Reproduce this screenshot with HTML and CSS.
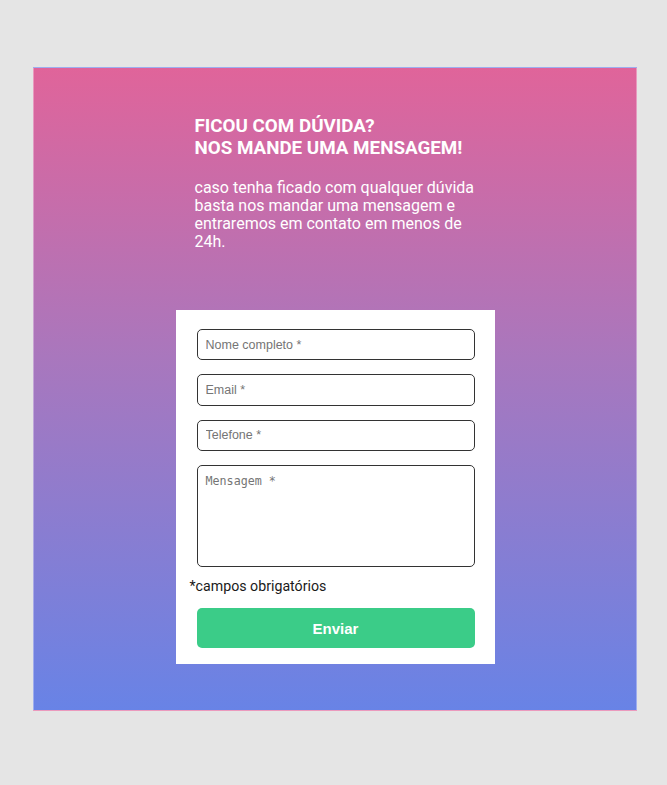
FILE: index.html
```html
<!DOCTYPE html>
<html lang="pt-BR">
<head>
<meta charset="utf-8">
<title>Contato</title>
<link rel="stylesheet" href="styles.css">
</head>
<body>
<section class="panel">
  <div class="column">
    <div class="intro">
      <h1 class="title">FICOU COM DÚVIDA?<br>NOS MANDE UMA MENSAGEM!</h1>
      <p class="lead">caso tenha ficado com qualquer dúvida basta nos mandar uma mensagem e entraremos em contato em menos de 24h.</p>
    </div>
    <form class="card">
      <input class="field" type="text" placeholder="Nome completo *">
      <input class="field" type="email" placeholder="Email *">
      <input class="field" type="tel" placeholder="Telefone *">
      <textarea class="field area" placeholder="Mensagem *"></textarea>
      <p class="note">*campos obrigatórios</p>
      <button class="submit" type="button">Enviar</button>
    </form>
  </div>
</section>
</body>
</html>
```

FILE: styles.css
```css
html, body {
  margin: 0;
  padding: 0;
}
body {
  background: #e5e5e5;
  min-height: 785px;
  padding-top: 67px;
  box-sizing: border-box;
}
.panel {
  margin-left: 33px;
  width: 604px;
  height: 644px;
  box-sizing: border-box;
  border: 1px solid rgba(255, 255, 255, 0.35);
  background: linear-gradient(180deg, #e0649a 0%, #a977bd 45%, #6883e6 100%);
  display: flex;
  justify-content: center;
}
.column {
  width: 319px;
  display: flex;
  flex-direction: column;
}
.intro {
  padding: 47px 0 0 19px;
  font-family: Roboto, "Liberation Sans", Arial, sans-serif;
  color: #ffffff;
}
.title {
  margin: 0;
  font-size: 18.8px;
  line-height: 22px;
  font-weight: 700;
}
.lead {
  margin: 20px 0 0;
  width: 290px;
  font-size: 16px;
  line-height: 18px;
}
.card {
  margin-top: 59px;
  background: #ffffff;
  box-sizing: border-box;
  border: 1px solid rgba(255, 255, 255, 0.5);
  height: 354px;
  padding: 18px 19px 0 20px;
  display: flex;
  flex-direction: column;
}
.field {
  display: block;
  box-sizing: border-box;
  width: 278px;
  height: 31.3px;
  margin: 0 0 14px;
  padding: 0 8px;
  border: 1px solid #333333;
  border-radius: 5px;
  background: #ffffff;
  font-family: "Liberation Sans", Arial, sans-serif;
  font-size: 12.5px;
  color: #333;
}
.field::placeholder {
  color: #757575;
}
.area {
  height: 102.5px;
  margin-bottom: 0;
  padding: 8px;
  resize: none;
  font-family: "DejaVu Sans Mono", "Liberation Mono", monospace;
  font-size: 11.7px;
}
.note {
  margin: 10px 0 0 -7px;
  font-family: Roboto, "Liberation Sans", Arial, sans-serif;
  font-size: 14.2px;
  line-height: 18px;
  color: #1a1a1a;
}
.submit {
  margin-top: 13px;
  width: 278px;
  height: 40px;
  border: none;
  border-radius: 5px;
  background: #3bcc88;
  color: #ffffff;
  font-family: "Liberation Sans", Arial, sans-serif;
  font-weight: 700;
  font-size: 15px;
  cursor: pointer;
}
```
